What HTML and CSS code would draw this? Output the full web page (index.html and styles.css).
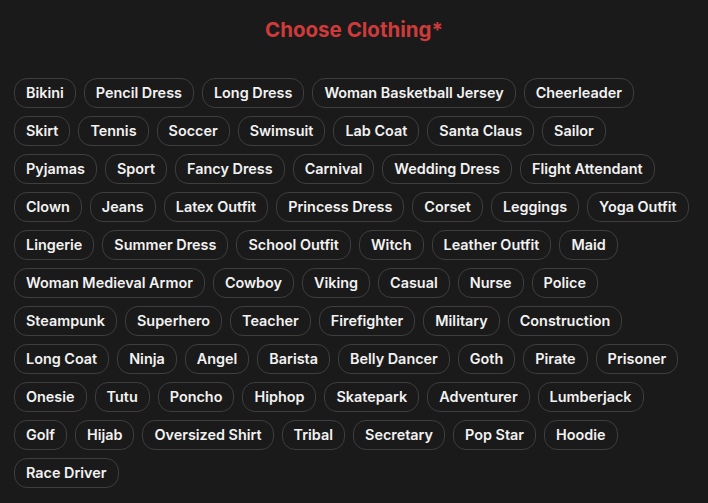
FILE: index.html
```html
<!DOCTYPE html>
<html lang="en">
<head>
  <meta charset="UTF-8" />
  <title>Choose Clothing</title>
  <link rel="stylesheet" href="styles.css">
</head>
<body>
  <section class="picker">
    <h2 class="picker-title">Choose Clothing*</h2>
    <div class="chips">
      <button class="chip">Bikini</button>
      <button class="chip">Pencil Dress</button>
      <button class="chip">Long Dress</button>
      <button class="chip">Woman Basketball Jersey</button>
      <button class="chip">Cheerleader</button>
      <button class="chip">Skirt</button>
      <button class="chip">Tennis</button>
      <button class="chip">Soccer</button>
      <button class="chip">Swimsuit</button>
      <button class="chip">Lab Coat</button>
      <button class="chip">Santa Claus</button>
      <button class="chip">Sailor</button>
      <button class="chip">Pyjamas</button>
      <button class="chip">Sport</button>
      <button class="chip">Fancy Dress</button>
      <button class="chip">Carnival</button>
      <button class="chip">Wedding Dress</button>
      <button class="chip">Flight Attendant</button>
      <button class="chip">Clown</button>
      <button class="chip">Jeans</button>
      <button class="chip">Latex Outfit</button>
      <button class="chip">Princess Dress</button>
      <button class="chip">Corset</button>
      <button class="chip">Leggings</button>
      <button class="chip">Yoga Outfit</button>
      <button class="chip">Lingerie</button>
      <button class="chip">Summer Dress</button>
      <button class="chip">School Outfit</button>
      <button class="chip">Witch</button>
      <button class="chip">Leather Outfit</button>
      <button class="chip">Maid</button>
      <button class="chip">Woman Medieval Armor</button>
      <button class="chip">Cowboy</button>
      <button class="chip">Viking</button>
      <button class="chip">Casual</button>
      <button class="chip">Nurse</button>
      <button class="chip">Police</button>
      <button class="chip">Steampunk</button>
      <button class="chip">Superhero</button>
      <button class="chip">Teacher</button>
      <button class="chip">Firefighter</button>
      <button class="chip">Military</button>
      <button class="chip">Construction</button>
      <button class="chip">Long Coat</button>
      <button class="chip">Ninja</button>
      <button class="chip">Angel</button>
      <button class="chip">Barista</button>
      <button class="chip">Belly Dancer</button>
      <button class="chip">Goth</button>
      <button class="chip">Pirate</button>
      <button class="chip">Prisoner</button>
      <button class="chip">Onesie</button>
      <button class="chip">Tutu</button>
      <button class="chip">Poncho</button>
      <button class="chip">Hiphop</button>
      <button class="chip">Skatepark</button>
      <button class="chip">Adventurer</button>
      <button class="chip">Lumberjack</button>
      <button class="chip">Golf</button>
      <button class="chip">Hijab</button>
      <button class="chip">Oversized Shirt</button>
      <button class="chip">Tribal</button>
      <button class="chip">Secretary</button>
      <button class="chip">Pop Star</button>
      <button class="chip">Hoodie</button>
      <button class="chip">Race Driver</button>
    </div>
  </section>
</body>
</html>
```

FILE: styles.css
```css
body {
  margin: 0;
  background-color: #1a1a1a;
  font-family: 'Inter', 'Open Sans', sans-serif;
  color: #f2f2f2;
}

.picker {
  padding: 14px 14px 20px;
}

.picker-title {
  margin: 0 0 32px;
  text-align: center;
  font-size: 20.5px;
  font-weight: 700;
  color: #cf3a3a;
  line-height: 32px;
}

.chips {
  display: flex;
  flex-wrap: wrap;
  gap: 8px 8px;
}

.chip {
  font-family: inherit;
  font-size: 14.4px;
  font-weight: 600;
  color: #f2f2f2;
  background-color: #1a1a1a;
  border: 1px solid #3e3e3e;
  border-radius: 13px;
  height: 30px;
  padding: 0 11px;
  line-height: 28px;
  cursor: pointer;
}
```
